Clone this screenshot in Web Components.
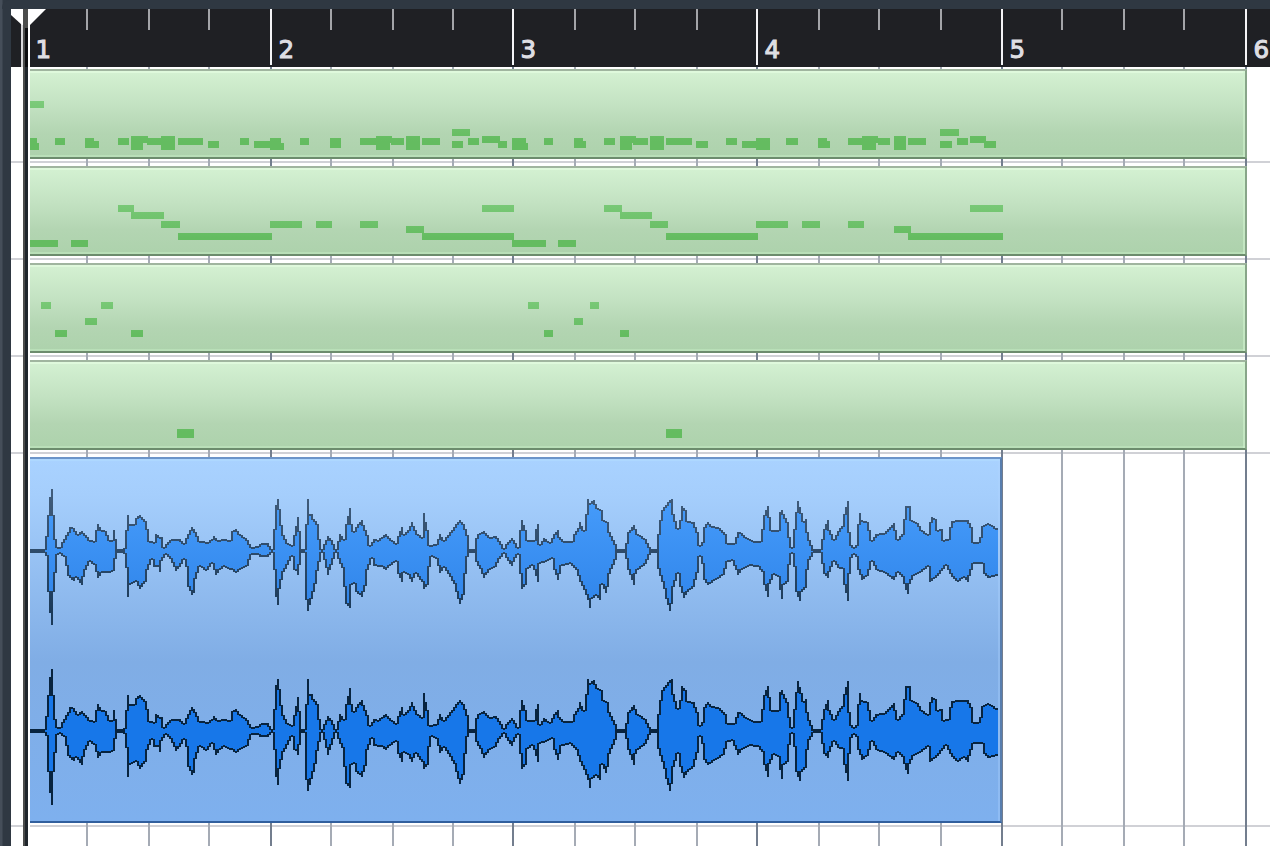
<!DOCTYPE html>
<html lang="en">
<head>
<meta charset="utf-8">
<title>Arrangement</title>
<style>
html, body {
  margin: 0;
  block-size: 100%;
  overflow: hidden;
  background: #2f3842;
  font-family: "DejaVu Sans", sans-serif;
}
</style>
</head>
<body>
<arrange-window>
  <bar-ruler slot="ruler"></bar-ruler>
  <track-lane style="--lane-height: 96px; --lane-padding: 2px">
    <midi-clip data-notes="30,101,14 30,138,7 30,143,9 55,138,10 85,138,9 85,141,14 118,138,11 131,136,17 131,143,12 147,138,15 161,136,14 161,143,14 178,138,25 208,141,11 240,138,9 254,141,17 270,138,11 270,143,14 300,138,9 330,138,11 330,141,11 360,138,17 376,136,16 376,143,14 391,138,13 406,136,14 406,143,14 422,138,18 452,129,18 452,141,11 468,138,11 482,136,18 498,141,9 512,138,14 512,143,16 544,138,9 574,138,9 574,141,12 604,138,11 620,136,16 620,143,12 633,138,15 650,136,14 650,143,14 666,138,26 696,141,12 726,138,11 742,141,14 756,138,14 756,143,14 786,138,12 818,138,9 818,141,12 848,138,14 862,136,16 862,143,14 878,138,12 894,136,12 894,143,12 908,138,18 940,129,19 940,141,12 957,138,11 970,136,16 984,141,12" data-top="69"></midi-clip>
  </track-lane>
  <track-lane>
    <midi-clip data-notes="30,240,28 71,240,17 118,205,16 131,212,33 161,221,19 178,233,94 270,221,32 316,221,16 360,221,18 406,226,18 422,233,92 482,205,32 512,240,34 558,240,18 604,205,18 620,212,32 650,221,18 666,233,92 756,221,32 802,221,18 848,221,16 894,226,17 908,233,95 970,205,33" data-top="166"></midi-clip>
  </track-lane>
  <track-lane>
    <midi-clip data-notes="41,302,10 101,302,12 85,318,12 55,330,12 131,330,12 528,302,11 544,330,9 574,318,9 590,302,9 620,330,9" data-top="263"></midi-clip>
  </track-lane>
  <track-lane>
    <midi-clip data-notes="177,429,17 666,429,16" data-top="360" data-note-height="9"></midi-clip>
  </track-lane>
  <track-lane style="--lane-height: 373px">
    <audio-clip></audio-clip>
  </track-lane>
</arrange-window>

<script>
const BEATS = [86, 148, 208, 270, 330, 392, 452, 512, 574, 634, 696, 756, 818, 878, 940, 1001, 1061, 1123, 1183, 1245];
const CLIP_LEFT = 30;

// Peak envelopes: x in the window, distance from the centre line
const UPPER = `30,1 43,2 45,15 47,36 49,54 52,62 54,36 55,12 57,4 60,4 62,9 64,12 67,19 70,24 74,23 77,17 82,20 87,14 89,11 93,10 95,21 98,27 102,21 106,20 109,11 112,11 114,21 116,12 118,1 122,1 124,3 126,21 128,36 130,27 133,27 136,33 140,36 145,30 148,22 150,10 153,9 156,17 159,14 162,14 164,4 168,9 172,12 180,12 183,8 187,17 192,24 196,19 200,10 208,9 212,12 214,15 217,11 223,12 230,11 232,20 235,22 240,17 247,11 250,7 252,4 258,5 261,8 267,8
269,5 272,2 274,22 276,46 278,52 280,42 282,26 284,16 287,8 291,6 294,16 296,25 298,34 300,20 302,1 304,2 306,27 308,52 310,37 312,37 314,32 317,27 319,12 321,2 323,7 328,15 332,11 335,2 338,10 340,17 343,12 346,27 349,43 351,27 353,20 357,27 361,31 364,26 367,16 370,6 373,12 377,11 380,13 386,17 390,13 395,8 398,15 402,24 404,17 408,21 411,29 415,21 418,17 421,14 423,38 426,29 428,21 430,6 435,7 439,17 443,11 448,16 453,24 457,29 460,31 464,27 467,16 469,1 473,1 476,13 478,17 484,20 490,14 495,15 499,10
503,3 506,7 511,13 515,8 518,4 520,21 522,31 526,21 528,11 533,11 536,22 538,27 540,7 544,13 550,9 553,17 557,21 560,14 563,10 571,10 574,17 577,23 580,29 583,21 585,37 587,52 590,48 593,51 597,43 601,41 604,31 607,29 610,19 615,7 618,1 624,1 626,8 628,19 633,26 637,17 645,12 649,4 651,1 656,1 658,17 660,31 662,41 667,49 672,52 674,37 677,23 679,31 681,45 685,41 688,30 694,29 697,19 699,6 702,9 704,24 707,29 712,25 720,23 725,17 727,8 733,8 737,19 741,18 745,14
750,12 753,10 760,10 762,22 764,36 768,45 770,34 772,21 777,21 780,39 782,41 785,33 787,29 790,14 792,4 794,22 796,39 798,50 801,38 803,30 806,32 808,19 810,11 813,1 819,2 822,12 824,22 827,31 830,21 833,12 837,20 842,25 844,37 847,50 849,19 851,6 853,4 855,6 857,27 859,38 862,31 867,29 869,21 872,11 876,17 883,18 888,22 893,28 896,21 898,12 902,17 904,32 906,45 910,45 912,31 917,28 922,21 927,17 929,29 932,34 935,32 937,21 941,22 944,11 947,12 949,24 952,30 958,31 968,31 971,24 973,9 978,9 980,14 982,25 987,28 993,25 998,21`;

const LOWER = `30,1 43,2 45,5 47,21 48,41 50,62 52,74 54,41 55,22 57,4 60,3 63,6 65,15 67,25 69,27 73,30 75,27 78,29 81,34 83,26 86,19 89,11 94,14 98,27 102,22 110,22 114,20 116,8 118,1 122,1 124,3 126,17 128,46 130,34 135,31 139,38 145,31 148,19 151,9 154,16 157,16 159,21 162,10 165,4 170,8 173,16 176,20 180,16 183,9 186,16 188,36 191,44 193,42 196,28 200,16 205,20 208,19 212,13 216,24 220,19 223,16 229,19 232,19 235,22 240,19 247,15 250,9 252,4 257,4 260,6 267,6
269,4 272,2 274,19 276,46 278,54 280,38 282,29 284,21 287,14 291,6 293,19 296,20 298,24 300,14 302,1 304,2 306,49 308,60 310,54 313,41 315,33 318,20 321,2 324,9 328,24 331,14 335,2 338,8 342,17 344,36 346,53 349,57 351,34 353,33 355,41 362,46 365,35 368,19 371,8 374,15 382,16 386,19 390,15 395,11 398,23 402,31 404,22 408,24 412,31 415,23 418,26 421,31 423,38 427,34 429,16 431,6 435,8 439,22 443,17 448,23 453,33 457,48 460,53 463,44 466,23 468,6 470,1 473,1 476,11 479,18 483,27 490,19 495,16 499,8
503,3 507,10 511,15 515,7 518,4 520,23 522,38 525,34 527,18 531,15 534,19 538,31 540,13 545,11 551,8 553,19 557,29 559,23 562,15 570,13 575,19 580,31 584,39 587,49 589,57 592,48 595,45 600,49 602,34 605,42 607,36 610,23 615,9 618,1 624,1 626,8 628,19 633,34 635,23 638,19 645,13 649,4 651,1 656,1 658,18 661,31 663,38 666,48 669,60 672,53 674,36 677,23 680,36 683,47 688,41 694,36 697,22 699,6 702,13 704,29 707,34 717,28 723,24 727,11 732,10 735,19 738,24 742,19
750,15 758,16 762,21 764,34 768,46 770,33 773,24 778,26 780,39 782,48 784,34 787,31 789,14 792,3 794,16 796,41 799,50 801,41 805,37 807,19 810,9 813,2 819,2 822,13 824,23 827,27 830,21 833,11 837,17 842,18 844,34 847,50 849,23 851,7 853,4 855,6 857,19 861,29 867,25 870,19 872,11 875,19 883,22 893,29 898,22 902,26 905,39 908,43 910,33 913,25 922,21 927,16 930,31 935,27 940,23 945,15 949,23 953,28 958,31 963,27 967,31 971,19 973,13 981,13 983,23 987,27 993,26 998,23`;

const parse = (list) => list.trim().split(/\s+/).map((item) => item.split(",").map(Number));

// One value for each two pixel column
function sample(list) {
  const points = parse(list).map(([x, v]) => [Math.floor(x / 2 + 0.5) * 2, v]).sort((a, b) => a[0] - b[0]);
  const columns = [];
  let i = 0;
  for (let x = 30; x <= 996; x += 2) {
    while (i < points.length - 2 && points[i + 1][0] <= x) i++;
    const [x0, v0] = points[i];
    const [x1, v1] = points[i + 1];
    const t = x1 === x0 ? 0 : Math.min(1, Math.max(0, (x - x0) / (x1 - x0)));
    columns.push(Math.max(1, Math.round(v0 + (v1 - v0) * t)));
  }
  return columns;
}

function wavePaths() {
  const upper = sample(UPPER);
  const lower = sample(LOWER);
  const inner = (values, i) => {
    const near = Math.min(values[i - 1] ?? values[i], values[i + 1] ?? values[i]);
    return Math.max(0, Math.min(values[i] - 2, near - 1));
  };
  let body = "";
  let edge = "";
  upper.forEach((up, i) => {
    const x = Math.max(0, i * 2 - 1);
    const w = i ? 2 : 1;
    const down = lower[i];
    body += `M${x} ${-up}h${w}V${down}h${-w}z`;
    edge += `M${x} ${-up}h${w}V${-inner(upper, i)}h${-w}z`;
    edge += `M${x} ${inner(lower, i)}h${w}V${down}h${-w}z`;
    if (up <= 2 && down <= 2) edge += `M${x} -2h${w}V2h${-w}z`;
  });
  // last column is one pixel wider
  const i = upper.length - 1;
  body += `M${i * 2 + 1} ${-upper[i]}h1V${lower[i]}h-1z`;
  edge += `M${i * 2 + 1} ${-upper[i]}h1v2h-1zM${i * 2 + 1} ${lower[i] - 2}h1v2h-1z`;
  return { body, edge };
}

class ArrangeWindow extends HTMLElement {
  constructor() {
    super();

    const shadowRoot = this.attachShadow({ mode: "open" });

    shadowRoot.innerHTML = `<style>
:host {
  display: flex;
  flex-direction: column;
  box-sizing: border-box;
  inline-size: 1270px;
  block-size: 846px;
  padding: 9px 0 0 11px;
  position: relative;
  overflow: hidden;
  background: linear-gradient(90deg, #454e59 2px, #2f3842 3px);
}
:host::before {
  content: "";
  position: absolute;
  inset: 0 0 auto 2px;
  block-size: 9px;
  border-start-start-radius: 8px;
  background: #2f3842;
}
main {
  flex: 1;
  position: relative;
  display: flex;
  flex-direction: column;
  background: #fff;
}
play-head {
  position: absolute;
  inset: 9px auto 0 11px;
  z-index: 3;
}
</style>
<slot name="ruler"></slot>
<main>
  <beat-grid></beat-grid>
  <slot></slot>
</main>
<play-head></play-head>`;
  }
}

class BarRuler extends HTMLElement {
  constructor() {
    super();

    const shadowRoot = this.attachShadow({ mode: "open" });
    const ticks = BEATS.map((x, i) => i % 4 === 3
      ? `<path fill="#f4f4f6" d="M${x - 11} 0h2v56h-2z"/>`
      : `<path fill="#a3a4a8" d="M${x - 11} 0h2v21h-2z"/>`).join("");
    const labels = [27, 270, 512, 756, 1001, 1245]
      .map((x, i) => `<text x="${x - 2.5}" y="48.5">${i + 1}</text>`).join("");

    shadowRoot.innerHTML = `<style>
:host {
  display: block;
  block-size: 58px;
  position: relative;
  background: #1f2024;
}
svg {
  display: block;
}
text {
  font-family: "DejaVu Sans", sans-serif;
  font-size: 24.5px;
  fill: #dedee3;
  stroke: #dedee3;
  stroke-width: 1.1px;
}
</style>
<svg width="1259" height="58" shape-rendering="crispEdges">${ticks}${labels}</svg>`;
  }
}

class BeatGrid extends HTMLElement {
  constructor() {
    super();

    const shadowRoot = this.attachShadow({ mode: "open" });
    const lines = BEATS.map((x, i) =>
      `<path fill="${i % 4 === 3 ? "#737e8e" : "#a5abb5"}" d="M${x - 11} 0h2v779h-2z"/>`).join("");

    shadowRoot.innerHTML = `<style>
:host {
  display: block;
  position: absolute;
  inset: 0;
  z-index: 1;
}
svg {
  display: block;
}
</style>
<svg width="1259" height="779" shape-rendering="crispEdges">${lines}</svg>`;
  }
}

class PlayHead extends HTMLElement {
  constructor() {
    super();

    const shadowRoot = this.attachShadow({ mode: "open" });

    shadowRoot.innerHTML = `<style>
:host {
  display: block;
}
svg {
  display: block;
}
</style>
<svg width="36" height="837">
  <path fill="#d9d9dc" d="M10 8h2v50h-2z" />
  <path fill="#fff" d="M0 0h35L19 16h-8L0 6z" />
  <path fill="#fff" d="M17 0h2v837h-2z" />
  <path fill="#0c0d0f" d="M12 17h5v41h-5z" />
  <path fill="#4b4c4b" d="M12 0h5v19h-3v818h-2z" />
  <path fill="#20262c" d="M14 58h3v779h-3z" />
</svg>`;
  }
}

class TrackLane extends HTMLElement {
  constructor() {
    super();

    const shadowRoot = this.attachShadow({ mode: "open" });

    shadowRoot.innerHTML = `<style>
:host {
  display: block;
  box-sizing: border-box;
  flex: none;
  block-size: var(--lane-height, 97px);
  padding: var(--lane-padding, 3px) 0 0 19px;
  border-block-end: 2px solid #d0d1d6;
}
</style>
<slot></slot>`;
  }
}

class MidiClip extends HTMLElement {
  constructor() {
    super();

    const shadowRoot = this.attachShadow({ mode: "open" });
    const { notes, top, noteHeight = 7 } = this.dataset;
    const rects = parse(notes).map(([x, y, w]) =>
      `<rect x="${x - CLIP_LEFT}" y="${y - top - 2}" width="${w}" height="${noteHeight}"/>`).join("");

    shadowRoot.innerHTML = `<style>
:host {
  display: block;
  box-sizing: border-box;
  position: relative;
  z-index: 2;
  inline-size: 1217px;
  block-size: 90px;
  border: solid;
  border-width: 2px 2px 2px 0;
  border-color: #a0b59f #88a589 #6c8c6d;
  background: linear-gradient(#d4f1d2, #c3e2c2 40%, #b3d5b2 72%, #add2ac);
  box-shadow: inset -2px 0 #d0f4ce99, inset 0 2px #dff9dc, inset 0 -2px #b9dfb8;
}
svg {
  display: block;
}
</style>
<svg width="1215" height="86" shape-rendering="crispEdges">
  <linearGradient id="note" gradientUnits="userSpaceOnUse" x1="0" y1="30" x2="0" y2="70">
    <stop stop-color="#7dcb7b" />
    <stop offset="1" stop-color="#64bc60" />
  </linearGradient>
  <g fill="url(#note)">${rects}</g>
</svg>`;
  }
}

class AudioClip extends HTMLElement {
  constructor() {
    super();

    const shadowRoot = this.attachShadow({ mode: "open" });
    const { body, edge } = wavePaths();

    shadowRoot.innerHTML = `<style>
:host {
  display: block;
  box-sizing: border-box;
  position: relative;
  z-index: 2;
  inline-size: 972px;
  block-size: 366px;
  border: solid;
  border-width: 2px 2px 2px 0;
  border-color: #6c95c9 #587eae #315f9d;
  background: linear-gradient(#a9d2ff, #a5cefc 10%, #80ade5 56%, #7eb0ee);
  box-shadow: inset -2px 0 #b0d5ff55, inset 0 2px #aed8ff;
}
svg {
  display: block;
}
</style>
<svg width="970" height="362" shape-rendering="crispEdges">
  <linearGradient id="fill" gradientUnits="userSpaceOnUse" x1="0" y1="-50" x2="0" y2="50">
    <stop stop-color="#459bfa" />
    <stop offset="1" stop-color="#3186eb" />
  </linearGradient>
  <linearGradient id="line" gradientUnits="userSpaceOnUse" x1="0" y1="-60" x2="0" y2="60">
    <stop stop-color="#415d7c" />
    <stop offset="1" stop-color="#1b3a59" />
  </linearGradient>
  <g transform="translate(0 92)">
    <path fill="url(#fill)" d="${body}" />
    <path fill="url(#line)" d="${edge}" />
  </g>
  <g transform="translate(0 272)">
    <path fill="#1777e9" d="${body}" />
    <path fill="#08243f" d="${edge}" />
  </g>
</svg>`;
  }
}

customElements.define("arrange-window", ArrangeWindow);
customElements.define("bar-ruler", BarRuler);
customElements.define("beat-grid", BeatGrid);
customElements.define("play-head", PlayHead);
customElements.define("track-lane", TrackLane);
customElements.define("midi-clip", MidiClip);
customElements.define("audio-clip", AudioClip);
</script>
</body>
</html>
